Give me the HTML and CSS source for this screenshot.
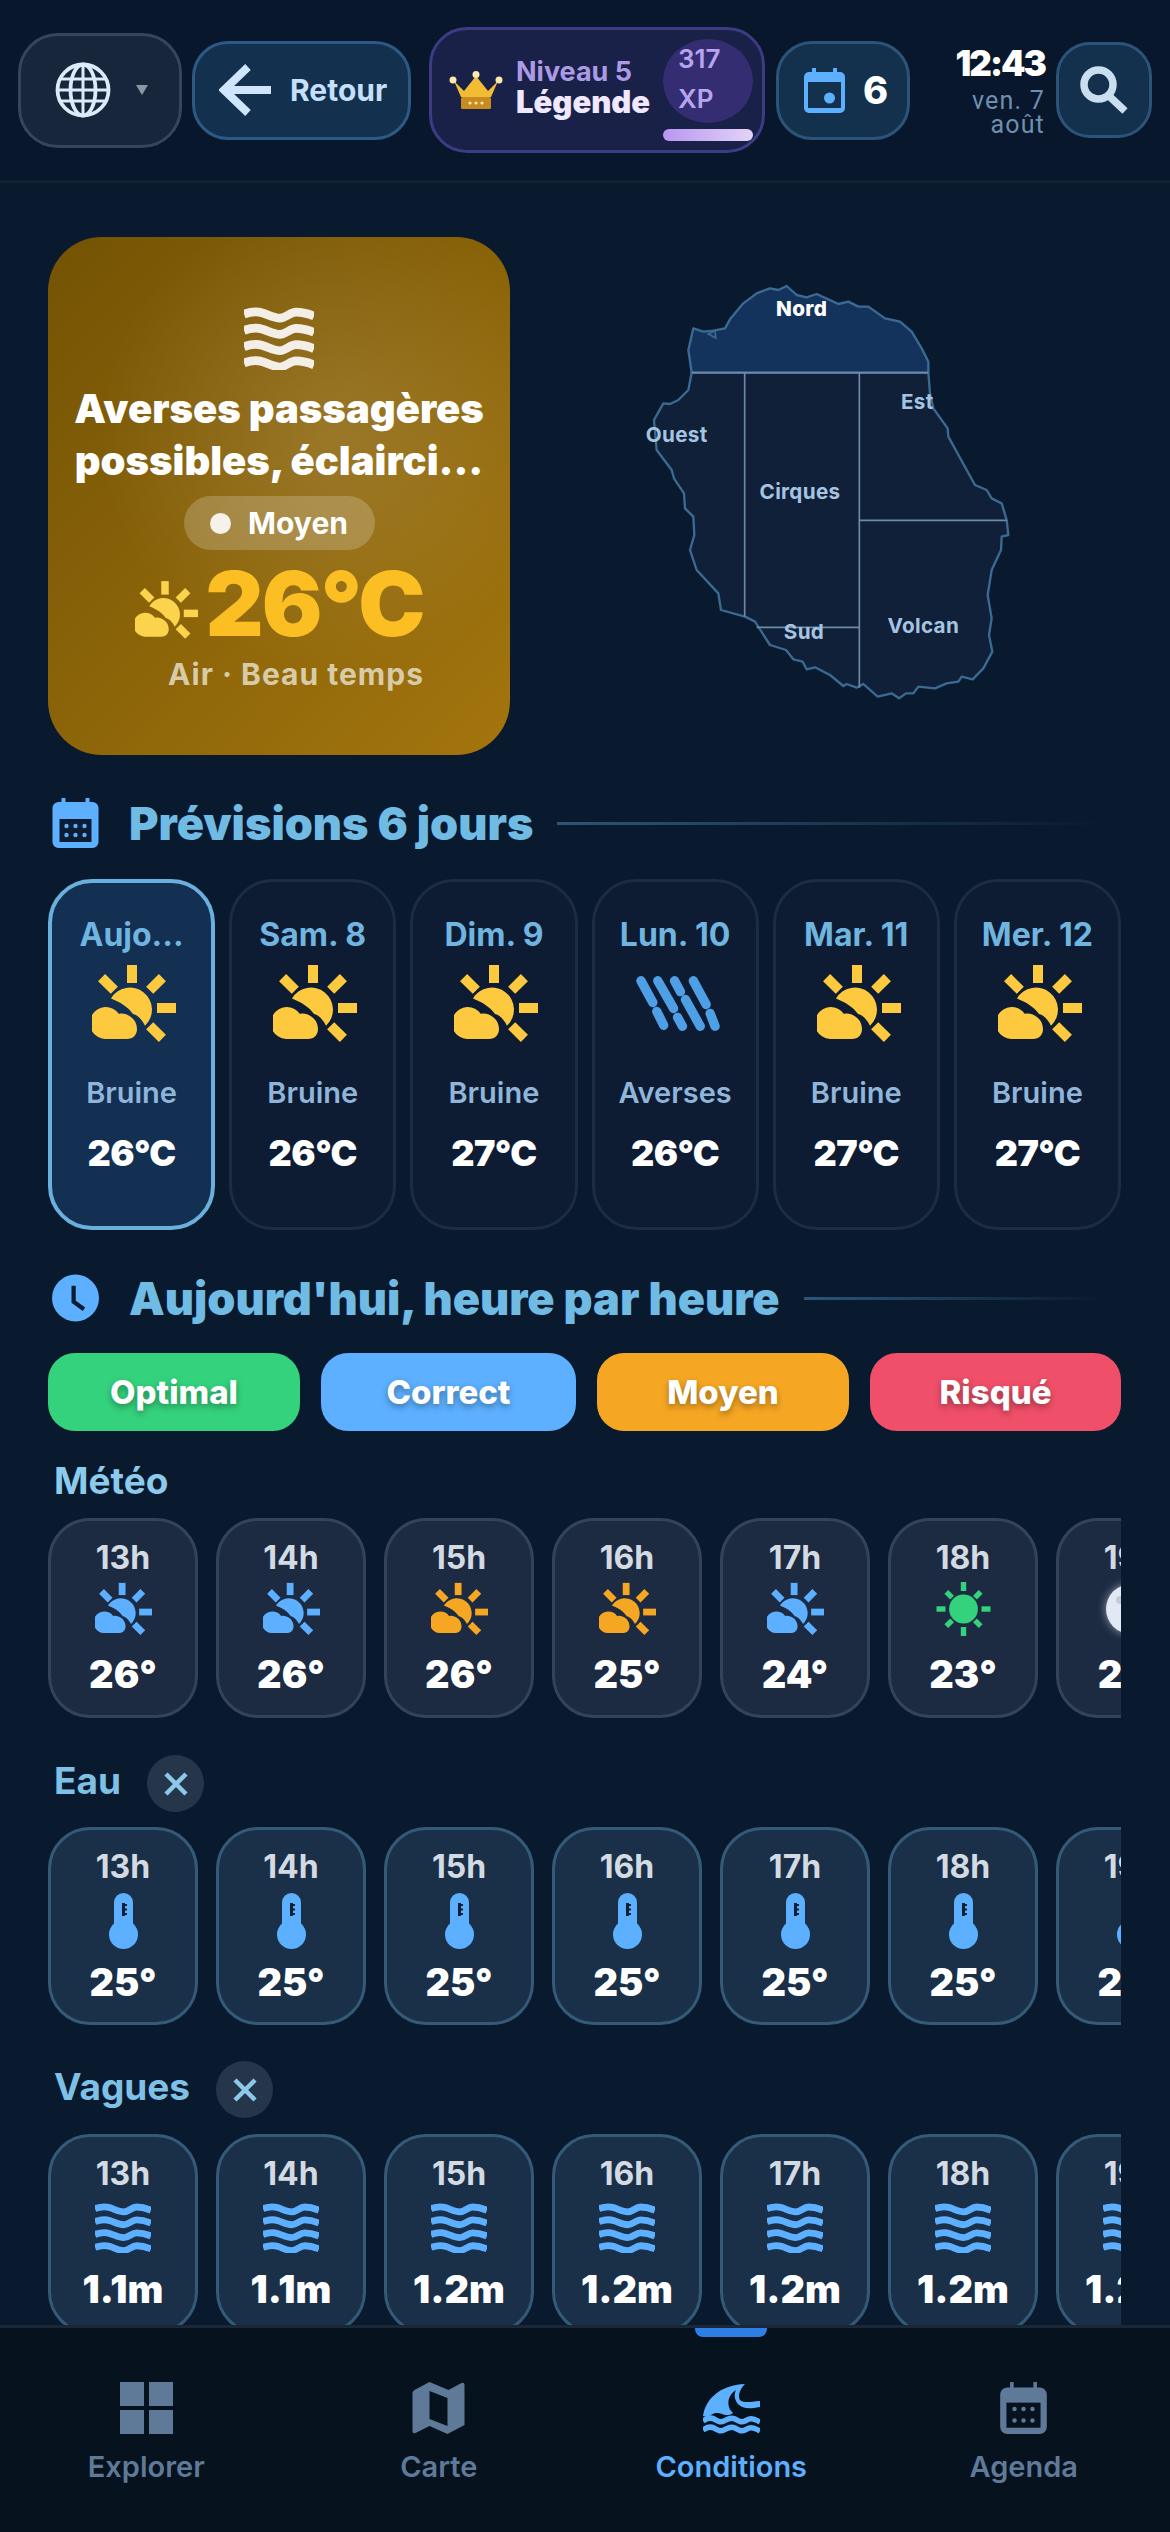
FILE: index.html
```html
<!DOCTYPE html>
<html lang="fr">
<head>
    <meta charset="UTF-8">
    <meta name="viewport" content="width=device-width, initial-scale=1.0">
    <title>Conditions</title>
    <link rel="stylesheet" href="styles.css">
</head>
<body>

<!-- shared icons -->
<svg class="icon-defs" xmlns="http://www.w3.org/2000/svg">
    <symbol id="i-partly" viewBox="0 0 84 77">
        <g fill="currentColor">
            <rect x="35" y="0" width="10" height="18"/>
            <rect x="35" y="0" width="10" height="18" transform="rotate(-45 40 43)"/>
            <rect x="35" y="0" width="10" height="18" transform="rotate(45 40 43)"/>
            <rect x="35" y="0" width="10" height="18" transform="rotate(135 40 43)"/>
            <rect x="65" y="38" width="19" height="10"/>
            <path d="M19 33.500A22 22 0 1 1 53 60.700C49 53 45 50 41 49C36 42 28 37 19 33.500Z"/>
            <path d="M13 74A16 16 0 1 1 27 49C32 47 45 52 45 64C45 70 41 74 35 74Z"/>
        </g>
    </symbol>
    <symbol id="i-sun" viewBox="0 0 60 60">
        <g fill="currentColor">
            <circle cx="30" cy="30" r="16"/>
            <rect x="27" y="0" width="6" height="10"/>
            <rect x="27" y="50" width="6" height="10"/>
            <rect x="0" y="27" width="10" height="6"/>
            <rect x="50" y="27" width="10" height="6"/>
            <rect x="27" y="3" width="6" height="9" transform="rotate(45 30 30)"/>
            <rect x="27" y="3" width="6" height="9" transform="rotate(135 30 30)"/>
            <rect x="27" y="3" width="6" height="9" transform="rotate(225 30 30)"/>
            <rect x="27" y="3" width="6" height="9" transform="rotate(315 30 30)"/>
        </g>
    </symbol>
    <symbol id="i-moon" viewBox="0 0 50 50">
        <circle cx="25" cy="25" r="25" fill="#e3e8f5"/>
        <circle cx="14" cy="16" r="4" fill="#c4cad8"/>
        <circle cx="30" cy="32" r="6" fill="#cfd5e3"/>
    </symbol>
    <symbol id="i-rain" viewBox="0 0 85 56">
        <g fill="none" stroke="currentColor" stroke-width="9.500" stroke-linecap="round">
            <path d="M5 5L17 27"/>
            <path d="M22 5L38 33"/>
            <path d="M39 5L45 16"/>
            <path d="M58 5L71 29"/>
            <path d="M21 36L28 50"/>
            <path d="M42 42L47 51"/>
            <path d="M50 24L65 51"/>
            <path d="M75 38L80 51"/>
        </g>
    </symbol>
    <symbol id="i-waves" viewBox="0 0 70 62" preserveAspectRatio="none">
        <g fill="none" stroke="currentColor" stroke-width="8.500">
            <path d="M0 7C8 4 13 4 19 6S30 11 36 11S46 5 52 5S63 6 70 9"/>
            <path d="M0 23C8 20 13 20 19 22S30 27 36 27S46 21 52 21S63 22 70 25"/>
            <path d="M0 39C8 36 13 36 19 38S30 43 36 43S46 37 52 37S63 38 70 41"/>
            <path d="M0 55C8 52 13 52 19 54S30 59 36 59S46 53 52 53S63 54 70 57"/>
        </g>
    </symbol>
    <symbol id="i-thermo" viewBox="0 0 29 56">
        <rect x="5" y="0" width="19" height="40" rx="9.500" fill="currentColor"/>
        <circle cx="14.500" cy="41.500" r="14.500" fill="currentColor"/>
        <path d="M13 10h3v13h-3zM16 11h2v2h-2zM16 15.500h2v2h-2zM16 20h2v2h-2z" fill="#0f2036"/>
    </symbol>
    <symbol id="i-close" viewBox="0 0 26 26">
        <path d="M3 3L23 23M23 3L3 23" fill="none" stroke="currentColor" stroke-width="4.500"/>
    </symbol>
</svg>

<header class="topbar">
    <div class="lang-btn">
        <svg class="globe" viewBox="0 0 56 56" fill="none" stroke="#dceafa" stroke-width="3.800">
            <circle cx="28" cy="28" r="25.500"/>
            <ellipse cx="28" cy="28" rx="12.500" ry="25.500"/>
            <path d="M28 2.500V53.500M5 17H51M5 39H51M2.500 28H53.500" stroke-width="3"/>
        </svg>
        <span class="caret"></span>
    </div>
    <div class="back-btn">
        <svg class="back-arrow" viewBox="0 0 52 52" fill="none" stroke="#cfe5fb" stroke-width="8">
            <path d="M52 26H6M29 3L5 26L29 49"/>
        </svg>
        <span>Retour</span>
    </div>
    <div class="level-card">
        <svg class="crown" viewBox="0 0 54 38">
            <path d="M5 10L15 20L27 5L39 20L49 10L42 26H12Z" fill="#f2bd35"/>
            <rect x="12" y="26" width="30" height="12" rx="1.500" fill="#c98a1f"/>
            <circle cx="4" cy="9" r="3.500" fill="#fde9b0"/>
            <circle cx="27" cy="3.500" r="3.500" fill="#fde9b0"/>
            <circle cx="50" cy="9" r="3.500" fill="#fde9b0"/>
            <circle cx="21" cy="32" r="1.600" fill="#fde9b0"/>
            <circle cx="27" cy="32" r="1.600" fill="#fde9b0"/>
            <circle cx="33" cy="32" r="1.600" fill="#fde9b0"/>
        </svg>
        <div class="level-text">
            <div class="level-num">Niveau 5</div>
            <div class="level-name">Légende</div>
        </div>
        <div class="xp-box">
            <div class="xp-circle">317<br>XP</div>
            <div class="xp-bar"></div>
        </div>
    </div>
    <div class="cal-btn">
        <svg class="cal-icon" viewBox="0 0 41 45">
            <path d="M8 0h4v4h17V0h4v4h3a5 5 0 0 1 5 5v31a5 5 0 0 1-5 5H5a5 5 0 0 1-5-5V9a5 5 0 0 1 5-5h3Z" fill="#5cb0ff"/>
            <rect x="4" y="14" width="33" height="26" fill="#13304c"/>
            <circle cx="25.500" cy="30" r="5.500" fill="#5cb0ff"/>
        </svg>
        <span>6</span>
    </div>
    <div class="clock">
        <div class="clock-time">12:43</div>
        <div class="clock-date">ven. 7<br>août</div>
    </div>
    <div class="search-btn">
        <svg viewBox="0 0 48 48" class="search-icon" fill="none" stroke="#c9dff0">
            <circle cx="18.500" cy="18.500" r="14.500" stroke-width="7.500"/>
            <path d="M28 29L45 45" stroke-width="7.500"/>
        </svg>
    </div>
</header>

<main class="content">
    <div class="top-row">
        <section class="hero">
            <svg class="hero-waves"><use href="#i-waves"/></svg>
            <div class="hero-title">Averses passagères possibles, éclairci...</div>
            <div class="hero-pill"><span class="pill-dot"></span>Moyen</div>
            <div class="hero-temp">
                <svg class="hero-sun"><use href="#i-partly"/></svg>
                <span>26°C</span>
            </div>
            <div class="hero-sub">Air · Beau temps</div>
        </section>

        <svg class="island" viewBox="0 0 1350 1380">
            <path class="zone" d="M985 338L990 400L1000 445L1043 505L1045 530L1125 675L1160 690L1175 715L1205 730L1220 780L1225 825L1205 830L1203 870L1175 930L1163 1005L1175 1075L1167 1125L1177 1175L1150 1225L1118 1258L1085 1250L1075 1265L1040 1270L1005 1285L955 1280L940 1300L918 1300L897 1315L875 1300L833 1310L790 1272L770 1283L740 1272L730 1278L690 1245L645 1222L620 1228L608 1205L580 1198L558 1170L510 1155L465 1085L435 1070L363 1050L355 1000L290 930L270 870L283 825L280 770L255 745L252 700L222 655L215 630L170 570L162 480L190 430L210 432L235 420L265 390L275 338Z"/>
            <path class="zone-on" d="M275 338L265 270L272 240L280 205L310 215L340 212L375 205L390 178L430 130L470 100L510 85L535 90L560 78L590 105L620 112L650 102L685 118L715 132L745 125L775 140L805 140L855 175L900 185L935 215L965 265L985 305L985 338Z"/>
            <path class="zone-line" d="M275 338H985M434 338V1070M778 338V1283M778 781H1220M470 1102H778"/>
            <path class="zone-detail" d="M325 222L345 212L347 234Z"/>
            <text class="zone-label on" x="605" y="168" text-anchor="middle">Nord</text>
            <text class="zone-label" x="230" y="547" text-anchor="middle">Ouest</text>
            <text class="zone-label" x="952" y="447" text-anchor="middle">Est</text>
            <text class="zone-label" x="600" y="717" text-anchor="middle">Cirques</text>
            <text class="zone-label" x="612" y="1137" text-anchor="middle">Sud</text>
            <text class="zone-label" x="970" y="1120" text-anchor="middle">Volcan</text>
        </svg>
    </div>

    <div class="section-head first">
        <svg class="head-icon" viewBox="0 0 46 50">
            <path d="M9 0h4v4h20V0h4v4h3a6 6 0 0 1 6 6v34a6 6 0 0 1-6 6H6a6 6 0 0 1-6-6V10a6 6 0 0 1 6-6h3Z" fill="#5cb0ff"/>
            <rect x="7" y="21" width="32" height="23" fill="#0c1c32"/>
            <g fill="#5cb0ff">
                <circle cx="14" cy="28" r="2.200"/><circle cx="23" cy="28" r="2.200"/><circle cx="32" cy="28" r="2.200"/>
                <circle cx="14" cy="37" r="2.200"/><circle cx="23" cy="37" r="2.200"/><circle cx="32" cy="37" r="2.200"/>
            </g>
        </svg>
        <h2>Prévisions 6 jours</h2>
        <span class="head-line"></span>
    </div>

    <div class="days">
        <div class="day active">
            <div class="day-name">Aujo...</div>
            <svg class="day-icon sun-y"><use href="#i-partly"/></svg>
            <div class="day-desc">Bruine</div>
            <div class="day-temp">26°C</div>
        </div>
        <div class="day">
            <div class="day-name">Sam. 8</div>
            <svg class="day-icon sun-y"><use href="#i-partly"/></svg>
            <div class="day-desc">Bruine</div>
            <div class="day-temp">26°C</div>
        </div>
        <div class="day">
            <div class="day-name">Dim. 9</div>
            <svg class="day-icon sun-y"><use href="#i-partly"/></svg>
            <div class="day-desc">Bruine</div>
            <div class="day-temp">27°C</div>
        </div>
        <div class="day">
            <div class="day-name">Lun. 10</div>
            <svg class="day-icon rain"><use href="#i-rain"/></svg>
            <div class="day-desc">Averses</div>
            <div class="day-temp">26°C</div>
        </div>
        <div class="day">
            <div class="day-name">Mar. 11</div>
            <svg class="day-icon sun-y"><use href="#i-partly"/></svg>
            <div class="day-desc">Bruine</div>
            <div class="day-temp">27°C</div>
        </div>
        <div class="day">
            <div class="day-name">Mer. 12</div>
            <svg class="day-icon sun-y"><use href="#i-partly"/></svg>
            <div class="day-desc">Bruine</div>
            <div class="day-temp">27°C</div>
        </div>
    </div>

    <div class="section-head">
        <svg class="head-icon" viewBox="0 0 50 50">
            <circle cx="25" cy="25" r="25" fill="#5cb0ff"/>
            <path d="M23 12V29L34 37" fill="none" stroke="#0c1c32" stroke-width="4.500"/>
        </svg>
        <h2>Aujourd'hui, heure par heure</h2>
        <span class="head-line"></span>
    </div>

    <div class="legend">
        <div class="chip optimal">Optimal</div>
        <div class="chip correct">Correct</div>
        <div class="chip moyen">Moyen</div>
        <div class="chip risque">Risqué</div>
    </div>

    <div class="row-label meteo-label">Météo</div>
    <div class="hours meteo">
        <div class="hour"><div class="h">13h</div><svg class="h-icon blue"><use href="#i-partly"/></svg><div class="v">26°</div></div>
        <div class="hour"><div class="h">14h</div><svg class="h-icon blue"><use href="#i-partly"/></svg><div class="v">26°</div></div>
        <div class="hour"><div class="h">15h</div><svg class="h-icon orange"><use href="#i-partly"/></svg><div class="v">26°</div></div>
        <div class="hour"><div class="h">16h</div><svg class="h-icon orange"><use href="#i-partly"/></svg><div class="v">25°</div></div>
        <div class="hour"><div class="h">17h</div><svg class="h-icon blue"><use href="#i-partly"/></svg><div class="v">24°</div></div>
        <div class="hour"><div class="h">18h</div><svg class="h-icon green"><use href="#i-sun"/></svg><div class="v">23°</div></div>
        <div class="hour"><div class="h">19h</div><svg class="h-icon moon"><use href="#i-moon"/></svg><div class="v">22°</div></div>
    </div>

    <div class="row-label closable eau-label"><span class="label-text">Eau</span><span class="close-btn"><svg><use href="#i-close"/></svg></span></div>
    <div class="hours water">
        <div class="hour"><div class="h">13h</div><svg class="h-icon thermo"><use href="#i-thermo"/></svg><div class="v">25°</div></div>
        <div class="hour"><div class="h">14h</div><svg class="h-icon thermo"><use href="#i-thermo"/></svg><div class="v">25°</div></div>
        <div class="hour"><div class="h">15h</div><svg class="h-icon thermo"><use href="#i-thermo"/></svg><div class="v">25°</div></div>
        <div class="hour"><div class="h">16h</div><svg class="h-icon thermo"><use href="#i-thermo"/></svg><div class="v">25°</div></div>
        <div class="hour"><div class="h">17h</div><svg class="h-icon thermo"><use href="#i-thermo"/></svg><div class="v">25°</div></div>
        <div class="hour"><div class="h">18h</div><svg class="h-icon thermo"><use href="#i-thermo"/></svg><div class="v">25°</div></div>
        <div class="hour"><div class="h">19h</div><svg class="h-icon thermo"><use href="#i-thermo"/></svg><div class="v">25°</div></div>
    </div>

    <div class="row-label closable vagues-label"><span class="label-text">Vagues</span><span class="close-btn"><svg><use href="#i-close"/></svg></span></div>
    <div class="hours swell">
        <div class="hour"><div class="h">13h</div><svg class="h-icon wave"><use href="#i-waves"/></svg><div class="v">1.1m</div></div>
        <div class="hour"><div class="h">14h</div><svg class="h-icon wave"><use href="#i-waves"/></svg><div class="v">1.1m</div></div>
        <div class="hour"><div class="h">15h</div><svg class="h-icon wave"><use href="#i-waves"/></svg><div class="v">1.2m</div></div>
        <div class="hour"><div class="h">16h</div><svg class="h-icon wave"><use href="#i-waves"/></svg><div class="v">1.2m</div></div>
        <div class="hour"><div class="h">17h</div><svg class="h-icon wave"><use href="#i-waves"/></svg><div class="v">1.2m</div></div>
        <div class="hour"><div class="h">18h</div><svg class="h-icon wave"><use href="#i-waves"/></svg><div class="v">1.2m</div></div>
        <div class="hour"><div class="h">19h</div><svg class="h-icon wave"><use href="#i-waves"/></svg><div class="v">1.2m</div></div>
    </div>
</main>

<nav class="tabbar">
    <div class="tab">
        <svg class="tab-icon" viewBox="0 0 53 52" fill="currentColor">
            <rect width="24" height="24"/><rect x="29" width="24" height="24"/>
            <rect y="28" width="24" height="24"/><rect x="29" y="28" width="24" height="24"/>
        </svg>
        <span>Explorer</span>
    </div>
    <div class="tab">
        <svg class="tab-icon" viewBox="0 0 52 52" fill="currentColor">
            <path fill-rule="evenodd" d="M2 8L17 0L36 8L49 1Q52 0 52 3V43L35 52L17 44L3 51Q0 52 0 49V10ZM17 9V37L35 44V16Z"/>
        </svg>
        <span>Carte</span>
    </div>
    <div class="tab on">
        <span class="tab-mark"></span>
        <svg class="tab-icon" viewBox="0 0 57 52" fill="currentColor">
            <path d="M0 34C2 18 16 3 42 2C36 8 35 14 37 18C40 21 46 20 57 19V25C46 27 40 27 35 22C31 17 31 12 33 8C27 12 24 18 26 25C27 29 30 31 33 33L30 31C25 35 19 32 19 32C12 29 8 33 8 33C4 36 0 34 0 34Z"/>
            <path d="M0 39C4 36 7 35 11 37S17 41 21 39S28 35 32 37S38 41 42 39S48 35 57 40" fill="none" stroke="currentColor" stroke-width="5.500"/>
            <path d="M0 48C4 45 7 44 11 46S17 50 21 48S28 44 32 46S38 50 42 48S48 44 57 49" fill="none" stroke="currentColor" stroke-width="5.500"/>
        </svg>
        <span>Conditions</span>
    </div>
    <div class="tab">
        <svg class="tab-icon" viewBox="0 0 52 58" fill="currentColor">
            <path d="M11 0h4v6h22V0h4v6h3a8 8 0 0 1 8 8v36a8 8 0 0 1-8 8H8a8 8 0 0 1-8-8V14a8 8 0 0 1 8-8h3Z"/>
            <rect x="7" y="23" width="38" height="28" fill="#06121e"/>
            <circle cx="16" cy="30" r="2.500"/><circle cx="26" cy="30" r="2.500"/><circle cx="36" cy="30" r="2.500"/>
            <circle cx="16" cy="43" r="2.500"/><circle cx="26" cy="43" r="2.500"/><circle cx="36" cy="43" r="2.500"/>
        </svg>
        <span>Agenda</span>
    </div>
</nav>

</body>
</html>
```

FILE: styles.css
```css
* {
    box-sizing: border-box;
}

html, body {
    margin: 0;
    height: 2532px;
}

body {
    display: flex;
    flex-direction: column;
    overflow: hidden;
    font-family: "Inter", "Liberation Sans", sans-serif;
    background: #0a1a2e;
    color: #fff;
}

.icon-defs {
    display: none;
}

/* top bar */

.topbar {
    height: 183px;
    flex: none;
    display: flex;
    align-items: center;
    padding: 0 18px;
    background: #08172b;
    border-bottom: 3px solid #122033;
}

.lang-btn {
    width: 164px;
    height: 115px;
    display: flex;
    align-items: center;
    padding-left: 34px;
    background: #17263a;
    border: 3px solid #35465a;
    border-radius: 40px;
}

.globe {
    width: 56px;
    height: 56px;
}

.caret {
    margin-left: 25px;
    border-left: 6px solid transparent;
    border-right: 6px solid transparent;
    border-top: 10px solid #8a97a5;
}

.back-btn {
    width: 219px;
    height: 99px;
    margin-left: 10px;
    display: flex;
    align-items: center;
    gap: 19px;
    padding-left: 24px;
    background: #14304f;
    border: 3px solid #2c5a85;
    border-radius: 36px;
    color: #c6e0fb;
    font-size: 30px;
    font-weight: 700;
}

.back-arrow {
    width: 52px;
    height: 52px;
}

.level-card {
    width: 336px;
    height: 126px;
    margin-left: 18px;
    display: flex;
    align-items: center;
    padding-left: 17px;
    background: #1a2149;
    border: 3px solid #3c3b83;
    border-radius: 38px;
}

.crown {
    width: 54px;
    height: 38px;
    flex: none;
}

.level-text {
    margin: -6px 0 0 13px;
    width: 147px;
}

.level-num {
    font-size: 27px;
    line-height: 30px;
    font-weight: 700;
    color: #ac9ae6;
}

.level-name {
    font-size: 31px;
    line-height: 30px;
    font-weight: 900;
    color: #efe8ff;
}

.xp-box {
    width: 90px;
}

.xp-circle {
    height: 84px;
    padding: 0 0 0 15px;
    font-size: 26px;
    line-height: 40px;
    font-weight: 600;
    color: #b8a4ee;
    background: #352d72;
    border-radius: 50%;
}

.xp-bar {
    height: 12px;
    margin-top: 6px;
    border-radius: 6px;
    background: linear-gradient(90deg, #b797f0, #e3d3f8);
}

.cal-btn {
    width: 134px;
    height: 99px;
    margin-left: 11px;
    display: flex;
    align-items: center;
    gap: 18px;
    padding-left: 25px;
    background: #13304c;
    border: 3px solid #2a5478;
    border-radius: 36px;
    font-size: 38px;
    font-weight: 800;
}

.cal-icon {
    width: 41px;
    height: 45px;
}

.clock {
    margin-left: auto;
    text-align: right;
}

.clock-time {
    font-size: 35px;
    line-height: 40px;
    font-weight: 900;
    letter-spacing: -2px;
}

.clock-date {
    margin-top: 6px;
    font-family: "Roboto", "Liberation Sans", sans-serif;
    font-size: 25px;
    line-height: 24px;
    letter-spacing: 1.2px;
    color: #6f8fb0;
}

.search-btn {
    width: 96px;
    height: 96px;
    margin-left: 11px;
    display: flex;
    align-items: center;
    justify-content: center;
    background: #13304c;
    border: 3px solid #2a5478;
    border-radius: 34px;
}

.search-icon {
    width: 48px;
    height: 48px;
}

/* main area */

.content {
    flex: 1;
    min-height: 0;
    overflow: hidden;
    padding: 54px 49px 0 48px;
}

.top-row {
    display: flex;
    align-items: flex-start;
}

.hero {
    width: 462px;
    height: 518px;
    flex: none;
    display: flex;
    flex-direction: column;
    align-items: center;
    padding-top: 70px;
    border-radius: 54px;
    background:
        radial-gradient(circle at 62% 38%, rgba(255, 255, 255, 0.13), rgba(255, 255, 255, 0) 55%),
        linear-gradient(135deg, #735304, #a3750e);
}

.hero-waves {
    width: 70px;
    height: 63px;
    color: #f4efe6;
}

.hero-title {
    width: 450px;
    margin-top: 13px;
    text-align: center;
    font-size: 40px;
    line-height: 52px;
    font-weight: 900;
}

.hero-pill {
    margin-top: 9px;
    width: 191px;
    height: 54px;
    display: flex;
    align-items: center;
    justify-content: center;
    gap: 17px;
    border-radius: 27px;
    background: rgba(255, 255, 255, 0.2);
    font-size: 30px;
    font-weight: 700;
}

.pill-dot {
    width: 21px;
    height: 21px;
    border-radius: 50%;
    background: #f6f2ea;
}

.hero-temp {
    display: flex;
    align-items: center;
    gap: 8px;
    height: 90px;
    margin-top: 8px;
    font-size: 90px;
    font-weight: 900;
    color: #fbbf24;
    letter-spacing: -2px;
}

.hero-sun {
    width: 63px;
    height: 58px;
    margin-top: 14px;
    color: #fcd34d;
}

.hero-sub {
    margin: 8px 0 0 34px;
    font-size: 30px;
    line-height: 36px;
    font-weight: 700;
    letter-spacing: 1px;
    color: #d8cba8;
}

.island {
    width: 450px;
    height: 460px;
    flex: none;
    margin: 23px 0 0 90px;
}

.zone {
    fill: #0f2038;
    stroke: #3b6a92;
    stroke-width: 7;
    stroke-linejoin: round;
}

.zone-on {
    fill: #14335c;
    stroke: #3b6a92;
    stroke-width: 7;
    stroke-linejoin: round;
}

.zone-line {
    fill: none;
    stroke: #6f8aa5;
    stroke-width: 5;
}

.zone-detail {
    fill: none;
    stroke: #3b6a92;
    stroke-width: 5;
}

.zone-label {
    font-size: 62px;
    font-weight: 700;
    letter-spacing: 1px;
    fill: #a6c4e2;
}

.zone-label.on {
    font-weight: 800;
    fill: #fff;
}

/* section titles */

.section-head {
    display: flex;
    align-items: center;
    height: 50px;
    margin: 43px 0 30px;
    padding-left: 4px;
}

.section-head.first {
    margin-bottom: 31px;
}

.head-icon {
    width: 47px;
    height: 50px;
    flex: none;
}

.section-head h2 {
    margin: 0 0 0 30px;
    font-size: 45px;
    font-weight: 900;
    color: #70bbe4;
    white-space: nowrap;
}

.head-line {
    flex: 1;
    height: 3px;
    margin: 0 16px 0 24px;
    background: linear-gradient(90deg, #2b5676, rgba(43, 86, 118, 0));
}

/* six days */

.days {
    display: grid;
    grid-template-columns: repeat(6, 1fr);
    gap: 14px;
}

.day {
    height: 351px;
    display: flex;
    flex-direction: column;
    align-items: center;
    padding-top: 35px;
    background: #0d1c33;
    border: 3px solid #1c2c42;
    border-radius: 44px;
}

.day.active {
    padding-top: 34px;
    background: #132f52;
    border: 4px solid #6bb0dd;
}

.day-name {
    font-size: 32px;
    line-height: 36px;
    font-weight: 700;
    color: #70b5e0;
    white-space: nowrap;
}

.day-icon {
    width: 84px;
    height: 77px;
    margin: 12px 0 0 5px;
}

.sun-y {
    color: #fdc93f;
}

.rain {
    color: #4f9fe6;
}

.day-desc {
    margin-top: 33px;
    font-size: 29px;
    line-height: 36px;
    font-weight: 600;
    color: #8fb6da;
}

.day-temp {
    margin-top: 20px;
    font-size: 36px;
    line-height: 44px;
    font-weight: 900;
    letter-spacing: -0.5px;
}

/* legend chips */

.legend {
    display: grid;
    grid-template-columns: 252px 255px 252px 251px;
    justify-content: space-between;
}

.chip {
    height: 78px;
    display: flex;
    align-items: center;
    justify-content: center;
    border-radius: 27px;
    font-size: 33px;
    font-weight: 800;
    text-shadow: 0 3px 6px rgba(0, 0, 0, 0.35);
}

.optimal { background: #34d27c; }
.correct { background: #5cb0ff; }
.moyen { background: #f5a623; }
.risque { background: #ef4f68; }

/* hourly rows */

.row-label {
    display: flex;
    align-items: center;
    height: 44px;
    padding-left: 6px;
    font-size: 37px;
    font-weight: 700;
    color: #7fc0e6;
}

.meteo-label {
    margin-top: 27px;
    color: #8ccbec;
}

.closable {
    height: 57px;
}

.eau-label {
    margin-top: 37px;
}

.vagues-label {
    margin-top: 36px;
}

.label-text {
    margin-bottom: 6px;
}

.close-btn {
    width: 57px;
    height: 57px;
    margin-left: 26px;
    display: flex;
    align-items: center;
    justify-content: center;
    border-radius: 50%;
    background: #25354a;
}

.close-btn svg {
    width: 26px;
    height: 26px;
    color: #8cc8ea;
}

.hours {
    display: flex;
    gap: 18px;
    margin-top: 15px;
    overflow: hidden;
}

.meteo {
    margin-top: 16px;
}

.swell {
    margin-top: 16px;
}

.hour {
    width: 150px;
    height: 200px;
    flex: none;
    display: flex;
    flex-direction: column;
    align-items: center;
    padding-top: 20px;
    background: #1c2b42;
    border: 3px solid #33445a;
    border-radius: 42px;
}

.water .hour,
.swell .hour {
    background: #1a3049;
    border-color: #345a78;
}

.water .hour {
    height: 198px;
}

.h {
    font-size: 32px;
    line-height: 34px;
    font-weight: 700;
    color: #d4dae2;
}

.v {
    font-size: 38px;
    line-height: 44px;
    font-weight: 900;
}

.h-icon {
    width: 57px;
    height: 54px;
    margin-top: 7px;
}

.h-icon + .v {
    margin-top: 16px;
}

.blue { color: #5cb0ff; }
.orange { color: #f5a623; }
.green { color: #34d27c; }

.moon {
    width: 50px;
    height: 50px;
    margin-top: 9px;
    filter: drop-shadow(0 0 5px rgba(227, 232, 245, 0.6));
}

.moon + .v {
    margin-top: 18px;
}

.h-icon.thermo {
    width: 29px;
    height: 56px;
    margin-top: 9px;
    color: #5cb0ff;
}

.thermo + .v {
    margin-top: 11px;
}

.h-icon.wave {
    width: 56px;
    height: 50px;
    margin-top: 12px;
    color: #5cb0ff;
}

.wave + .v {
    margin-top: 14px;
}

/* bottom tabs */

.tabbar {
    height: 207px;
    flex: none;
    display: grid;
    grid-template-columns: repeat(4, 1fr);
    background: #06121e;
    border-top: 3px solid #1a2738;
}

.tab {
    position: relative;
    display: flex;
    flex-direction: column;
    align-items: center;
    padding-top: 54px;
    font-size: 29px;
    font-weight: 600;
    color: #5f7a99;
}

.tab.on {
    color: #5cb0ff;
}

.tab-icon {
    height: 52px;
    width: 57px;
}

.tab span:last-child {
    margin-top: 15px;
    line-height: 36px;
}

.tab-mark {
    position: absolute;
    top: 0;
    left: 50%;
    width: 72px;
    height: 9px;
    margin-left: -36px;
    background: #2d7fe6;
    border-radius: 0 0 8px 8px;
}
```
